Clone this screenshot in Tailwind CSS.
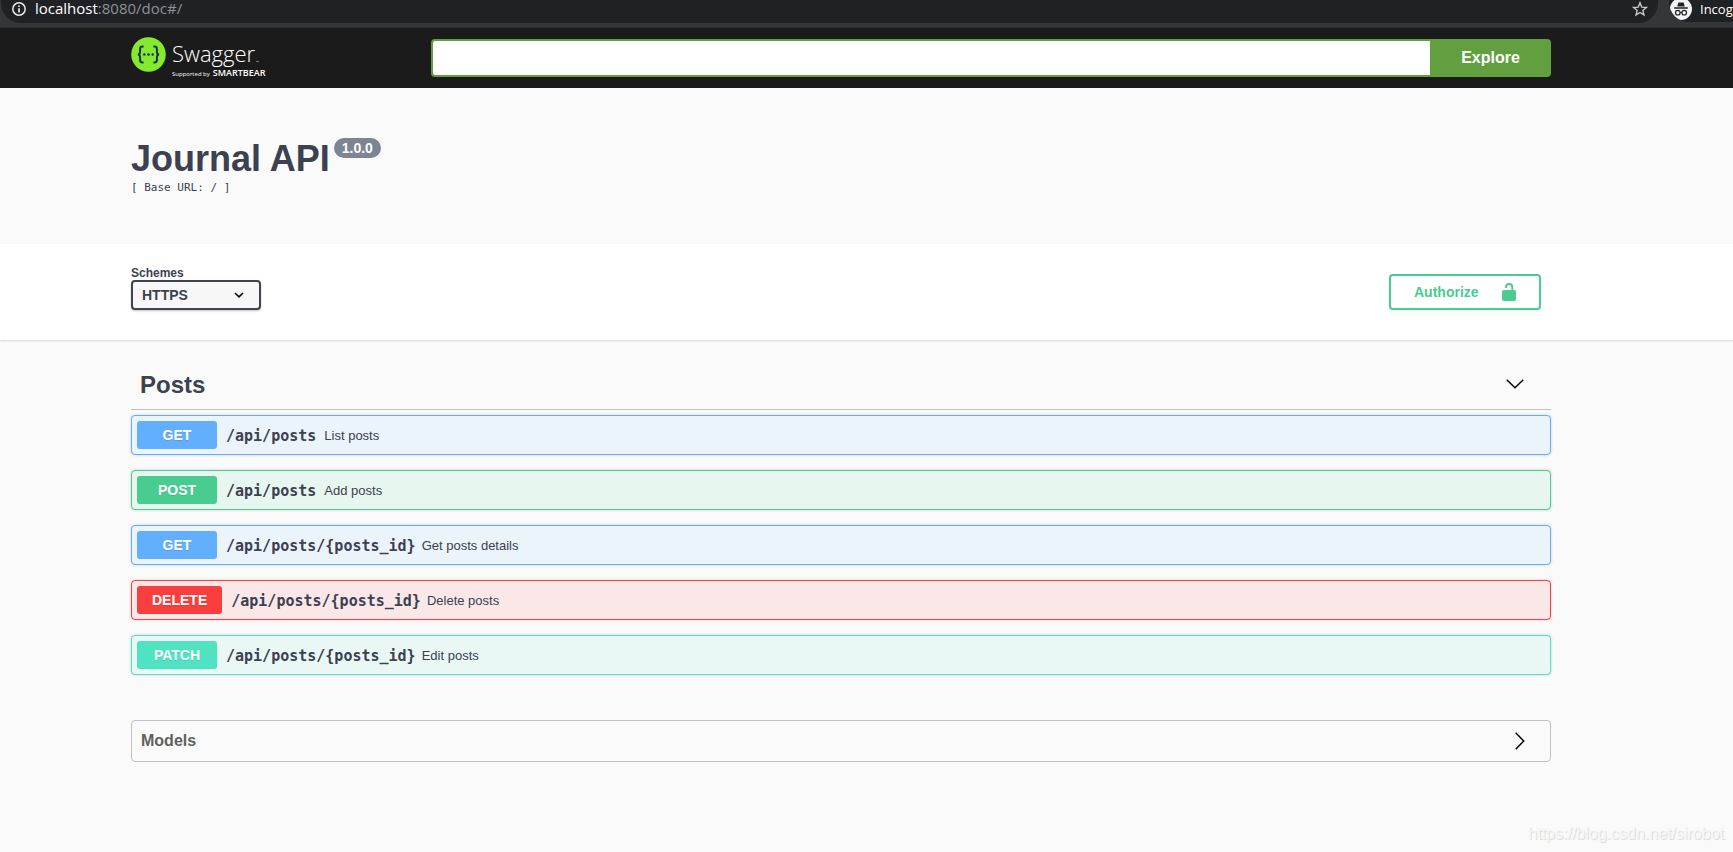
<!DOCTYPE html>
<html lang="en">
<head>
<meta charset="utf-8">
<title>Journal API</title>
<script src="https://cdn.jsdelivr.net/npm/@tailwindcss/browser@4"></script>
</head>
<body class="relative min-h-screen overflow-x-hidden bg-[#fafafa] font-['Liberation_Sans',Arial,sans-serif] text-[#3b4151]">

<div class="flex h-7 items-start overflow-hidden border-b border-[#2b2b2b] bg-[#35363a] font-['Open_Sans',sans-serif]">
  <div class="ml-px flex h-[23px] flex-1 items-start rounded-b-[20px] bg-[#202124] pl-[10px] pr-[10px]">
    <svg class="mt-px size-4 shrink-0" viewBox="0 0 16 16" fill="none" aria-hidden="true"><circle cx="8" cy="8" r="6.2" stroke="#e8eaed" stroke-width="1.5"/><path d="M8 7.3v4.2M8 4.4v1.7" stroke="#e8eaed" stroke-width="1.7"/></svg>
    <span class="ml-2 text-[15px] leading-4 text-[#8d9196]"><span class="text-white">localhost</span>:8080/doc#/</span>
    <button class="ml-auto" aria-label="Bookmark this page">
      <svg class="mt-px size-4" viewBox="0 0 16 16" fill="none"><path d="M8 1.8l1.75 4.3 4.65.35-3.55 3 1.1 4.5L8 11.5l-3.95 2.45 1.1-4.5-3.55-3 4.65-.35z" stroke="#c4c7cb" stroke-width="1.4"/></svg>
    </button>
  </div>
  <div class="ml-[11px] flex h-[22px] w-[64px] items-start overflow-hidden rounded-bl-[20px] bg-[#202124]">
    <svg class="ml-px h-5 w-[22px] shrink-0" viewBox="0 0 22 20" fill="none" aria-hidden="true"><circle cx="11" cy="9" r="11" fill="#f1f3f4"/><path d="M7.2 6.6 8.4 2.5h5.2l1.2 4.1z" fill="#202124"/><path d="M4.2 8h13.6" stroke="#202124" stroke-width="1.3"/><circle cx="7.8" cy="12.7" r="2.3" stroke="#202124" stroke-width="1.2"/><circle cx="14.2" cy="12.7" r="2.3" stroke="#202124" stroke-width="1.2"/><path d="M10.1 12.5h1.8" stroke="#202124" stroke-width="1.2"/></svg>
    <span class="ml-2 whitespace-nowrap text-[13px] leading-[19px] text-white">Incognito</span>
  </div>
</div>

<header class="bg-[#1b1b1b] pr-[51px]">
  <div class="mx-auto flex h-[60px] max-w-[1420px] items-center">
    <a href="#" class="flex w-[300px] shrink-0 items-start text-white" aria-label="Swagger, supported by SmartBear">
      <svg class="size-[35px] shrink-0" viewBox="0 0 35 35" fill="none" aria-hidden="true"><circle cx="17.5" cy="17.5" r="17.3" fill="#85ea2d"/><g stroke="#173647" stroke-width="2"><path d="M12.6 9.6h-1.2c-1.7 0-2.3.8-2.3 2.4v2.5c0 2-.6 2.9-2.2 3 1.6.1 2.2 1 2.2 3V23c0 1.600.6 2.400 2.300 2.400h1.200"/><path d="M22.400 9.600h1.200c1.700 0 2.300.8 2.300 2.400v2.500c0 2 .6 2.900 2.200 3-1.600.1-2.200 1-2.200 3V23c0 1.600-.6 2.400-2.300 2.400h-1.200"/></g><g fill="#173647"><circle cx="13.300" cy="17.500" r="1.300"/><circle cx="17.500" cy="17.500" r="1.300"/><circle cx="21.700" cy="17.500" r="1.300"/></g></svg>
      <span class="ml-[6px] flex flex-col pt-px font-['Open_Sans',sans-serif]">
        <span class="flex items-end text-[22px] leading-[30px] font-light">Swagger<span class="mb-[6px] ml-px h-px w-[3px] bg-[#777]"></span></span>
        <span class="flex items-baseline gap-[3px] leading-[9px]"><span class="text-[6px]">Supported by</span><span class="text-[9px] font-semibold">SMARTBEAR</span></span>
      </span>
    </a>
    <form class="flex h-[38px] flex-1">
      <input type="text" aria-label="API definition URL" class="min-w-0 flex-1 rounded-l border-2 border-r-0 border-[#62a03f] bg-white px-[10px] text-sm outline-none">
      <button type="button" class="w-[121px] rounded-r bg-[#62a03f] text-base font-bold text-white">Explore</button>
    </form>
  </div>
</header>

<main>
  <section class="pr-[51px]">
    <div class="mx-auto h-[156px] max-w-[1420px] pt-[50px]">
      <h1 class="flex items-start text-4xl leading-[42px] font-bold">Journal API<span class="ml-1 rounded-full bg-[#7d8492] px-2 text-sm leading-5 text-white">1.0.0</span></h1>
      <p class="font-['DejaVu_Sans_Mono',monospace] text-[11px] leading-4">[ Base URL: / ]</p>
    </div>
  </section>

  <section class="bg-white pr-[51px] shadow-[0_1px_2px_rgba(0,0,0,0.15)]">
    <div class="mx-auto flex h-[96px] max-w-[1420px] items-start justify-between">
      <div class="flex flex-col pt-[22px]">
        <label for="schemes" class="text-xs leading-[14px] font-bold">Schemes</label>
        <div class="grid items-center">
          <select id="schemes" class="col-start-1 row-start-1 h-[30px] w-[130px] appearance-none rounded border-2 border-[#41444e] bg-[#f7f7f7] pl-[9px] text-sm font-bold shadow-[0_1px_2px_rgba(0,0,0,0.25)]"><option>HTTPS</option><option>HTTP</option></select>
          <svg class="pointer-events-none col-start-1 row-start-1 mr-[17px] h-[6px] w-[10px] justify-self-end" viewBox="0 0 10 6" fill="none" aria-hidden="true"><path d="M1 1l4 3.800L9 1" stroke="#000" stroke-width="1.600"/></svg>
        </div>
      </div>
      <button class="mt-[30px] mr-[10px] flex h-9 w-[152px] items-center justify-between rounded border-2 border-[#49cc90] px-[23px] text-sm font-bold text-[#49cc90] shadow-[0_1px_2px_rgba(0,0,0,0.1)]">Authorize
        <svg class="h-[18px] w-[14px]" viewBox="0 0 14 18" aria-hidden="true"><path d="M4 5V4.200C4 2 5.200 1 7.200 1s3.100 1.300 3.100 3.500V8" fill="none" stroke="#49cc90" stroke-width="1.900"/><rect y="7" width="14" height="11" rx="2" fill="#49cc90"/></svg>
      </button>
    </div>
  </section>

  <section class="pr-[51px]">
    <div class="mx-auto max-w-[1420px] pt-[19px]">
      <div class="mb-[5px] flex h-[51px] items-center border-b border-[#3b4151]/30 pr-[27px] pl-[9px]">
        <h2 class="flex-1 pt-[2px] text-2xl font-bold">Posts</h2>
        <button aria-label="Collapse Posts"><svg class="h-[10px] w-[18px]" viewBox="0 0 18 10" fill="none"><path d="M.7.700 9 8.700 17.300.7" stroke="#000" stroke-width="1.500"/></svg></button>
      </div>
      <div class="flex flex-col gap-[15px]">
        <button class="flex h-10 items-center rounded border border-[#61affe] bg-[#ebf3fb] px-[5px] text-left shadow-[0_0_3px_rgba(0,0,0,0.19)]"><span class="min-w-20 rounded-[3px] bg-[#61affe] px-[13px] text-center text-sm leading-7 font-bold text-white text-shadow-[0_1px_0_rgba(0,0,0,0.1)]">GET</span><span class="ml-[9px] pt-[2px] font-['DejaVu_Sans_Mono',monospace] text-[15px] font-bold">/api/posts</span><span class="ml-2 pt-px text-[13px]">List posts</span></button>
        <button class="flex h-10 items-center rounded border border-[#49cc90] bg-[#e8f6f0] px-[5px] text-left shadow-[0_0_3px_rgba(0,0,0,0.19)]"><span class="min-w-20 rounded-[3px] bg-[#49cc90] px-[13px] text-center text-sm leading-7 font-bold text-white text-shadow-[0_1px_0_rgba(0,0,0,0.1)]">POST</span><span class="ml-[9px] pt-[2px] font-['DejaVu_Sans_Mono',monospace] text-[15px] font-bold">/api/posts</span><span class="ml-2 pt-px text-[13px]">Add posts</span></button>
        <button class="flex h-10 items-center rounded border border-[#61affe] bg-[#ebf3fb] px-[5px] text-left shadow-[0_0_3px_rgba(0,0,0,0.19)]"><span class="min-w-20 rounded-[3px] bg-[#61affe] px-[13px] text-center text-sm leading-7 font-bold text-white text-shadow-[0_1px_0_rgba(0,0,0,0.1)]">GET</span><span class="ml-[9px] pt-[2px] font-['DejaVu_Sans_Mono',monospace] text-[15px] font-bold">/api/posts/{posts_id}</span><span class="ml-[6px] pt-px text-[13px]">Get posts details</span></button>
        <button class="flex h-10 items-center rounded border border-[#f93e3e] bg-[#fae7e7] px-[5px] text-left shadow-[0_0_3px_rgba(0,0,0,0.19)]"><span class="min-w-20 rounded-[3px] bg-[#f93e3e] px-[15px] text-center text-sm leading-7 font-bold text-white text-shadow-[0_1px_0_rgba(0,0,0,0.1)]">DELETE</span><span class="ml-[9px] pt-[2px] font-['DejaVu_Sans_Mono',monospace] text-[15px] font-bold">/api/posts/{posts_id}</span><span class="ml-[6px] pt-px text-[13px]">Delete posts</span></button>
        <button class="flex h-10 items-center rounded border border-[#50e3c2] bg-[#e9f8f5] px-[5px] text-left shadow-[0_0_3px_rgba(0,0,0,0.19)]"><span class="min-w-20 rounded-[3px] bg-[#50e3c2] px-[13px] text-center text-sm leading-7 font-bold text-white text-shadow-[0_1px_0_rgba(0,0,0,0.1)]">PATCH</span><span class="ml-[9px] pt-[2px] font-['DejaVu_Sans_Mono',monospace] text-[15px] font-bold">/api/posts/{posts_id}</span><span class="ml-[6px] pt-px text-[13px]">Edit posts</span></button>
      </div>
      <div class="mt-[45px] flex h-[42px] items-center rounded border border-[#3b4151]/30 pr-[25px] pl-[9px]">
        <h2 class="flex-1 text-base font-bold text-[#606060]">Models</h2>
        <button aria-label="Expand Models"><svg class="h-[18px] w-[10px]" viewBox="0 0 10 18" fill="none"><path d="M.7.700 8.700 9l-8 8.300" stroke="#000" stroke-width="1.500"/></svg></button>
      </div>
    </div>
  </section>
</main>

<span class="absolute right-[9px] bottom-2 text-base leading-5 text-[#f6f6f6] text-shadow-[1px_1px_1px_rgba(0,0,0,0.14)]">https://blog.csdn.net/sirobot</span>
</body>
</html>
